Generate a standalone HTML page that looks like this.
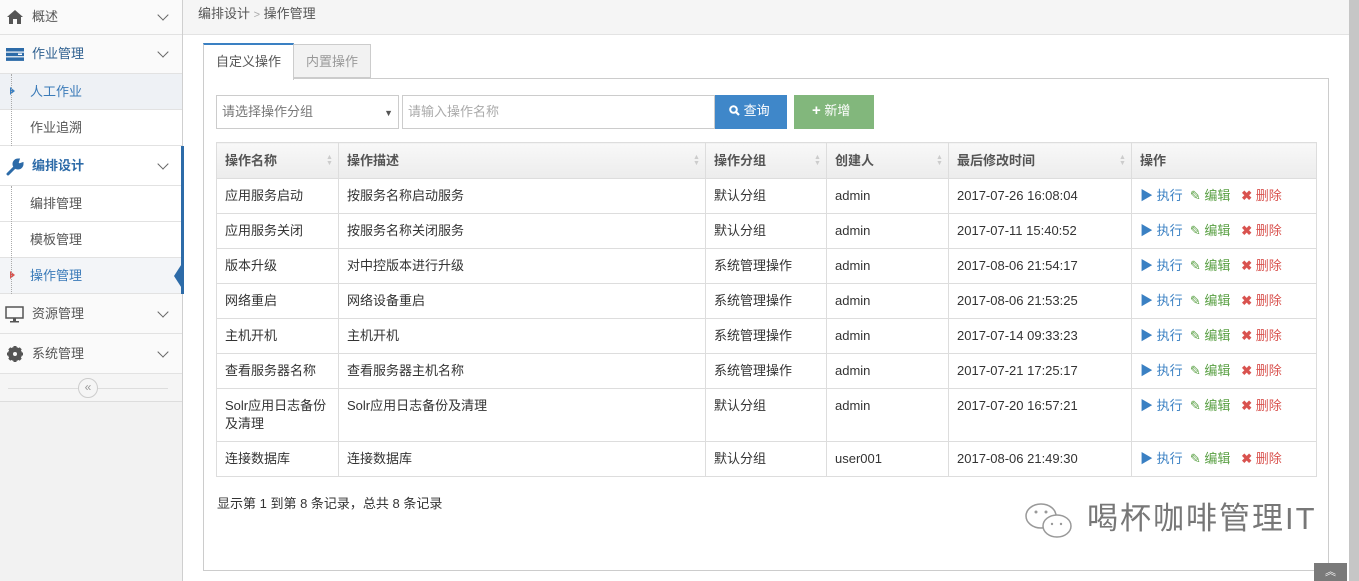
<!DOCTYPE html>
<html><head><meta charset="utf-8">
<style>
*{box-sizing:border-box;margin:0;padding:0}
body{width:1359px;height:581px;overflow:hidden;background:#fff;font-family:"Liberation Sans","Noto Sans CJK SC",sans-serif;font-size:13px;line-height:16px;color:#333;position:relative}
#side{position:absolute;left:0;top:0;width:183px;height:581px;background:#f2f2f2;border-right:1px solid #cfcfcf}
.it{position:absolute;left:0;width:182px;background:#fafafa;border-bottom:1px solid #e2e2e2;color:#555;font-size:13px}
.it .t{position:absolute;left:32px;top:50%;transform:translateY(-50%)}
.it .chev{position:absolute;left:159px;top:50%;width:8px;height:8px;border-right:1.5px solid #666;border-bottom:1.5px solid #666;transform:translateY(-75%) rotate(45deg)}
.sub{background:#fff}
.sub .t{left:30px}
.dl{position:absolute;left:11px;width:0;border-left:1px dotted #aaa}
.hd{position:absolute;left:183px;top:0;width:1176px;height:35px;background:#f5f5f5;border-bottom:1px solid #e3e3e3;font-size:13px;color:#555;padding:6px 0 0 15px}
table{border-collapse:collapse;table-layout:fixed;position:absolute;left:216px;top:142px;width:1100px}
td,th{border:1px solid #ddd;padding:0 8px;text-align:left;vertical-align:top;font-size:13px;line-height:16px}
th{height:36px;vertical-align:middle;background:linear-gradient(#f8f8f8,#ececec);color:#555;font-weight:bold;position:relative}
td{height:35px;padding-top:9px;color:#333}
.so{position:absolute;right:6px;top:12px;width:6px;color:#ccc;font-size:7px;line-height:6px}
.a1{color:#3a80c3}.a2{color:#5aa044}.a3{color:#d9534f}
</style></head><body>
<div id="side">
 <div class="it" style="top:0;height:35px"><svg style="position:absolute;left:7px;top:10px" width="16" height="14" viewBox="0 0 16 14"><path d="M8 0L0 7h2v7h4V9h4v5h4V7h2z" fill="#555"/></svg><span class="t">概述</span><span class="chev"></span></div>
 <div class="it" style="top:35px;height:39px"><svg style="position:absolute;left:6px;top:13px" width="18" height="13"><rect width="18" height="3.5" fill="#2d6ba8"/><rect y="4.7" width="18" height="3.5" fill="#2d6ba8"/><rect y="9.4" width="18" height="3.5" fill="#2d6ba8"/><rect x="12" y="5.5" width="4" height="1.5" fill="#fff"/></svg><span class="t" style="color:#2d5f8f">作业管理</span><span class="chev"></span></div>
 <div class="it sub" style="top:74px;height:36px;background:#eef1f5"><span style="position:absolute;left:10px;top:13px;border-left:5px solid #3a80c3;border-top:4px solid transparent;border-bottom:4px solid transparent"></span><span class="t" style="color:#3a7ab8">人工作业</span></div>
 <div class="it sub" style="top:110px;height:36px"><span class="t">作业追溯</span></div>
 <div class="dl" style="top:74px;height:72px"></div>
 <div class="it" style="top:146px;height:40px;background:#fff"><svg style="position:absolute;left:6px;top:12px" width="18" height="18" viewBox="0 0 18 18"><path d="M2 16L10 8M12 2a4 4 0 1 0 4 4l-3 1-2-2 1-3z" stroke="#2d6ba8" stroke-width="3" fill="#2d6ba8" stroke-linecap="round"/></svg><span class="t" style="color:#2d6ba8;font-weight:bold">编排设计</span><span class="chev"></span></div>
 <div class="it sub" style="top:186px;height:36px"><span class="t">编排管理</span></div>
 <div class="it sub" style="top:222px;height:36px"><span class="t">模板管理</span></div>
 <div class="it sub" style="top:258px;height:36px;background:#f3f5f8"><span style="position:absolute;left:10px;top:13px;border-left:5px solid #d9534f;border-top:4px solid transparent;border-bottom:4px solid transparent"></span><span class="t" style="color:#3a7ab8">操作管理</span></div>
 <div class="dl" style="top:186px;height:108px"></div>
 <div style="position:absolute;left:181px;top:146px;width:3px;height:148px;background:#2d6ba8"></div>
 <div style="position:absolute;left:174px;top:262px;border-right:9px solid #2d6ba8;border-top:14px solid transparent;border-bottom:14px solid transparent"></div>
 <div class="it" style="top:294px;height:40px"><svg style="position:absolute;left:5px;top:12px" width="19" height="17"><rect x="1" y="1" width="17" height="11" fill="none" stroke="#555" stroke-width="1.5"/><rect x="8" y="12" width="3" height="3" fill="#555"/><rect x="5" y="15" width="9" height="1.5" fill="#555"/></svg><span class="t">资源管理</span><span class="chev"></span></div>
 <div class="it" style="top:334px;height:40px"><svg style="position:absolute;left:7px;top:12px" width="16" height="16" viewBox="0 0 16 16"><circle cx="8" cy="8" r="5.5" fill="none" stroke="#555" stroke-width="3"/><path d="M8 0v16M0 8h16M2.3 2.3l11.4 11.4M13.7 2.3L2.3 13.7" stroke="#555" stroke-width="3"/><circle cx="8" cy="8" r="2" fill="#fafafa"/></svg><span class="t">系统管理</span><span class="chev"></span></div>
 <div style="position:absolute;left:0;top:374px;width:182px;height:28px;background:#f5f5f5;border-bottom:1px solid #ddd"><div style="position:absolute;left:8px;top:14px;width:160px;border-top:1px solid #ddd"></div><div style="position:absolute;left:78px;top:4px;width:20px;height:20px;border-radius:50%;border:1px solid #ccc;background:#f5f5f5;color:#999;font-size:12px;text-align:center;line-height:17px">«</div></div>
</div>
<div class="hd">编排设计 <span style="color:#aaa;font-size:11px">&gt;</span> 操作管理</div>
<div style="position:absolute;left:203px;top:78px;width:1126px;height:493px;border:1px solid #ccc"></div>
<div style="position:absolute;left:203px;top:43px;width:91px;height:37px;background:#fff;border:1px solid #ccc;border-top:2px solid #3a80c3;border-bottom:none;color:#555;padding-top:9px;text-align:center">自定义操作</div>
<div style="position:absolute;left:294px;top:44px;width:77px;height:34px;background:#f2f2f2;border:1px solid #ccc;border-left:none;color:#999;padding-top:9px;text-align:center">内置操作</div>
<div style="position:absolute;left:216px;top:95px;width:183px;height:34px;border:1px solid #ccc;color:#777;padding:8px 0 0 5px">请选择操作分组<span style="position:absolute;right:5px;top:9px;font-size:9px;color:#555">▼</span></div>
<div style="position:absolute;left:402px;top:95px;width:313px;height:34px;border:1px solid #ccc;color:#aaa;padding:8px 0 0 5px">请输入操作名称</div>
<div style="position:absolute;left:715px;top:95px;width:72px;height:34px;background:#3f87c9;color:#fff;padding:8px 0 0 14px"><svg width="11" height="11" style="vertical-align:-1px"><circle cx="4.5" cy="4.5" r="3.3" fill="none" stroke="#fff" stroke-width="2"/><path d="M7 7l3 3" stroke="#fff" stroke-width="2.2"/></svg> 查询</div>
<div style="position:absolute;left:794px;top:95px;width:80px;height:34px;background:#82b77c;color:#fff;padding:8px 0 0 18px"><b style="font-size:15px;line-height:13px">+</b> 新增</div>
<table>
<colgroup><col style="width:122px"><col style="width:367px"><col style="width:121px"><col style="width:122px"><col style="width:183px"><col style="width:185px"></colgroup>
<tr><th>操作名称<span class="so">▲<br>▼</span></th><th>操作描述<span class="so">▲<br>▼</span></th><th>操作分组<span class="so">▲<br>▼</span></th><th>创建人<span class="so">▲<br>▼</span></th><th>最后修改时间<span class="so">▲<br>▼</span></th><th>操作</th></tr>
<tr><td>应用服务启动</td><td>按服务名称启动服务</td><td>默认分组</td><td>admin</td><td>2017-07-26 16:08:04</td><td class="op"></td></tr>
<tr><td>应用服务关闭</td><td>按服务名称关闭服务</td><td>默认分组</td><td>admin</td><td>2017-07-11 15:40:52</td><td class="op"></td></tr>
<tr><td>版本升级</td><td>对中控版本进行升级</td><td>系统管理操作</td><td>admin</td><td>2017-08-06 21:54:17</td><td class="op"></td></tr>
<tr><td>网络重启</td><td>网络设备重启</td><td>系统管理操作</td><td>admin</td><td>2017-08-06 21:53:25</td><td class="op"></td></tr>
<tr><td>主机开机</td><td>主机开机</td><td>系统管理操作</td><td>admin</td><td>2017-07-14 09:33:23</td><td class="op"></td></tr>
<tr><td>查看服务器名称</td><td>查看服务器主机名称</td><td>系统管理操作</td><td>admin</td><td>2017-07-21 17:25:17</td><td class="op"></td></tr>
<tr><td style="height:53px;line-height:18px;padding-top:8px">Solr应用日志备份及清理</td><td>Solr应用日志备份及清理</td><td>默认分组</td><td>admin</td><td>2017-07-20 16:57:21</td><td class="op"></td></tr>
<tr><td>连接数据库</td><td>连接数据库</td><td>默认分组</td><td>user001</td><td>2017-08-06 21:49:30</td><td class="op"></td></tr>
</table>
<div style="position:absolute;left:217px;top:496px;color:#333">显示第 1 到第 8 条记录，总共 8 条记录</div>
<div style="position:absolute;left:1023px;top:500px;width:50px;height:42px">
<svg width="55" height="45" viewBox="0 0 55 45"><ellipse cx="18" cy="16" rx="15" ry="12" fill="none" stroke="#999" stroke-width="1.5"/><ellipse cx="34" cy="26" rx="14" ry="11" fill="#fff" stroke="#999" stroke-width="1.5"/><circle cx="13" cy="12" r="1.5" fill="#999"/><circle cx="23" cy="12" r="1.5" fill="#999"/><circle cx="29" cy="24" r="1.2" fill="#999"/><circle cx="38" cy="24" r="1.2" fill="#999"/></svg></div>
<div style="position:absolute;left:1087px;top:500px;font-size:31px;line-height:38px;color:#777;letter-spacing:2px">喝杯咖啡管理IT</div>
<div style="position:absolute;left:1349px;top:0;width:10px;height:581px;background:#c6c6c6"></div>
<div style="position:absolute;left:1314px;top:563px;width:33px;height:18px;background:#7a7a7a;color:#fff;text-align:center;font-size:11px;line-height:18px">︽</div>
<script>
document.querySelectorAll('td.op').forEach(function(c){c.innerHTML='<span class="a1">▶ 执行</span>&nbsp;&nbsp;<span class="a2">✎ 编辑</span>&nbsp;&nbsp;&nbsp;<span class="a3"><b>✖</b> 删除</span>';});
</script>
</body></html>
